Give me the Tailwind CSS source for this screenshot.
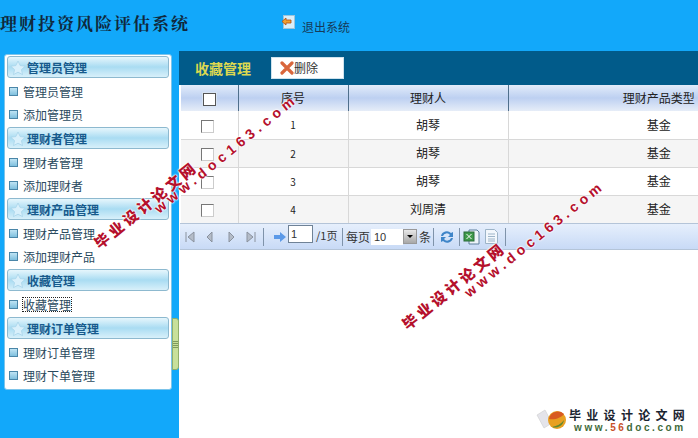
<!DOCTYPE html>
<html lang="zh">
<head>
<meta charset="UTF-8" />
<title>理财投资风险评估系统</title>
<script src="https://cdn.jsdelivr.net/npm/@tailwindcss/browser@4"></script>
</head>
<body class="relative w-[698px] h-[438px] overflow-hidden bg-[#12a8fa] font-['Noto_Sans_CJK_SC','Liberation_Sans',sans-serif] text-[12px] text-[#222]">

<!-- Header -->
<header class="h-[51px] flex items-start">
  <h1 class="w-[272px] pt-[11px] text-[17px] leading-[24px] font-bold tracking-[2px] text-[#10283c] font-['Noto_Serif_CJK_SC','Noto_Sans_CJK_SC',serif] whitespace-nowrap">理财投资风险评估系统</h1>
  <svg class="mt-[14px] ml-[9px]" width="15" height="16" viewBox="0 0 15 16">
    <rect x="2.500" y="1.500" width="11" height="13" fill="#d8eefa" stroke="#9cc4dc" stroke-width="1"/>
    <path d="M1 7.500 5 4v2h5v3H5v2z" fill="#f0a030" stroke="#b04a10" stroke-width=".8"/>
  </svg>
  <span class="mt-[18px] ml-[6px] text-[#163a58] leading-[18px]">退出系统</span>
</header>

<div class="flex h-[387px]">
  <!-- Sidebar -->
  <div class="relative w-[179px] shrink-0">
    <nav class="mt-[3px] ml-[4px] w-[168px] h-[336px] bg-white rounded-[3px] border border-[#7cc4ea] px-[2px] pt-[1px] text-[#2a4a5e]">

      <div class="h-[22px] pt-[1px] flex items-center rounded-[3px] border border-[#8db9cf] bg-gradient-to-b from-[#e6f6fc] via-[#a9dcf2] to-[#d8f0fa] pl-[2px] font-bold text-[#175a8c]">
        <svg class="mr-[1px]" width="16" height="16" viewBox="0 0 16 16"><path d="M8 1l2.200 4.600 5 .6-3.700 3.400 1 5L8 12.200 3.500 14.600l1-5L.8 6.200l5-.6z" fill="#d9f0fb" stroke="#a8d4ea" stroke-width=".8"/></svg>
        管理员管理
      </div>
      <ul class="pt-[2px] pb-[1px]">
        <li class="h-[23px] flex items-center pl-[2px]"><span class="w-[9px] h-[9px] mr-[5px] border border-[#4a86a8] bg-gradient-to-b from-[#bfe4f4] to-[#7fc0de]"></span>管理员管理</li>
        <li class="h-[23px] flex items-center pl-[2px]"><span class="w-[9px] h-[9px] mr-[5px] border border-[#4a86a8] bg-gradient-to-b from-[#bfe4f4] to-[#7fc0de]"></span>添加管理员</li>
      </ul>

      <div class="h-[22px] pt-[1px] flex items-center rounded-[3px] border border-[#8db9cf] bg-gradient-to-b from-[#e6f6fc] via-[#a9dcf2] to-[#d8f0fa] pl-[2px] font-bold text-[#175a8c]">
        <svg class="mr-[1px]" width="16" height="16" viewBox="0 0 16 16"><path d="M8 1l2.200 4.600 5 .6-3.700 3.400 1 5L8 12.200 3.500 14.600l1-5L.8 6.200l5-.6z" fill="#d9f0fb" stroke="#a8d4ea" stroke-width=".8"/></svg>
        理财者管理
      </div>
      <ul class="pt-[2px] pb-[1px]">
        <li class="h-[23px] flex items-center pl-[2px]"><span class="w-[9px] h-[9px] mr-[5px] border border-[#4a86a8] bg-gradient-to-b from-[#bfe4f4] to-[#7fc0de]"></span>理财者管理</li>
        <li class="h-[23px] flex items-center pl-[2px]"><span class="w-[9px] h-[9px] mr-[5px] border border-[#4a86a8] bg-gradient-to-b from-[#bfe4f4] to-[#7fc0de]"></span>添加理财者</li>
      </ul>

      <div class="h-[22px] pt-[1px] flex items-center rounded-[3px] border border-[#8db9cf] bg-gradient-to-b from-[#e6f6fc] via-[#a9dcf2] to-[#d8f0fa] pl-[2px] font-bold text-[#175a8c]">
        <svg class="mr-[1px]" width="16" height="16" viewBox="0 0 16 16"><path d="M8 1l2.200 4.600 5 .6-3.700 3.400 1 5L8 12.200 3.500 14.600l1-5L.8 6.200l5-.6z" fill="#d9f0fb" stroke="#a8d4ea" stroke-width=".8"/></svg>
        理财产品管理
      </div>
      <ul class="pt-[2px] pb-[1px]">
        <li class="h-[23px] flex items-center pl-[2px]"><span class="w-[9px] h-[9px] mr-[5px] border border-[#4a86a8] bg-gradient-to-b from-[#bfe4f4] to-[#7fc0de]"></span>理财产品管理</li>
        <li class="h-[23px] flex items-center pl-[2px]"><span class="w-[9px] h-[9px] mr-[5px] border border-[#4a86a8] bg-gradient-to-b from-[#bfe4f4] to-[#7fc0de]"></span>添加理财产品</li>
      </ul>

      <div class="h-[22px] pt-[1px] flex items-center rounded-[3px] border border-[#8db9cf] bg-gradient-to-b from-[#e6f6fc] via-[#a9dcf2] to-[#d8f0fa] pl-[2px] font-bold text-[#175a8c]">
        <svg class="mr-[1px]" width="16" height="16" viewBox="0 0 16 16"><path d="M8 1l2.200 4.600 5 .6-3.700 3.400 1 5L8 12.200 3.500 14.600l1-5L.8 6.200l5-.6z" fill="#d9f0fb" stroke="#a8d4ea" stroke-width=".8"/></svg>
        收藏管理
      </div>
      <ul class="pt-[2px] pb-[1px]">
        <li class="h-[23px] flex items-center pl-[2px]"><span class="w-[9px] h-[9px] mr-[5px] border border-[#4a86a8] bg-gradient-to-b from-[#bfe4f4] to-[#7fc0de]"></span><span class="outline-1 outline-dotted outline-[#222] leading-[13px]">收藏管理</span></li>
      </ul>

      <div class="h-[22px] pt-[1px] flex items-center rounded-[3px] border border-[#8db9cf] bg-gradient-to-b from-[#e6f6fc] via-[#a9dcf2] to-[#d8f0fa] pl-[2px] font-bold text-[#175a8c]">
        <svg class="mr-[1px]" width="16" height="16" viewBox="0 0 16 16"><path d="M8 1l2.200 4.600 5 .6-3.700 3.400 1 5L8 12.200 3.500 14.600l1-5L.8 6.200l5-.6z" fill="#d9f0fb" stroke="#a8d4ea" stroke-width=".8"/></svg>
        理财订单管理
      </div>
      <ul class="pt-[2px] pb-[1px]">
        <li class="h-[23px] flex items-center pl-[2px]"><span class="w-[9px] h-[9px] mr-[5px] border border-[#4a86a8] bg-gradient-to-b from-[#bfe4f4] to-[#7fc0de]"></span>理财订单管理</li>
        <li class="h-[23px] flex items-center pl-[2px]"><span class="w-[9px] h-[9px] mr-[5px] border border-[#4a86a8] bg-gradient-to-b from-[#bfe4f4] to-[#7fc0de]"></span>理财下单管理</li>
      </ul>
    </nav>
    <!-- Collapse handle -->
    <div class="absolute left-[172px] top-[267px] w-[7px] h-[52px] bg-[#c8e09a] border border-[#8fae6a] rounded-r-[3px] flex flex-col justify-center gap-[1px]">
      <span class="h-px bg-[#7f9a5e]"></span><span class="h-px bg-[#7f9a5e]"></span><span class="h-px bg-[#7f9a5e]"></span><span class="h-px bg-[#7f9a5e]"></span>
    </div>
  </div>

  <!-- Main -->
  <main class="flex-1 min-w-0 bg-white overflow-hidden">
    <div class="h-[34px] bg-[#015b8a] flex items-center pl-[16px]">
      <span class="w-[76px] text-[14px] font-bold text-[#dcd850]">收藏管理</span>
      <button class="w-[73px] h-[22px] bg-white border border-[#cfe3ee] flex items-center pl-[8px] text-[#333]">
        <svg width="14" height="14" viewBox="0 0 14 14"><path d="M2 2 12 12M12 2 2 12" stroke="#d9663c" stroke-width="3.200" stroke-linecap="round"/></svg>
        删除
      </button>
    </div>

    <table class="ml-[2px] w-[628px] table-fixed border-collapse text-center">
      <colgroup><col class="w-[57px]" /><col class="w-[110px]" /><col class="w-[160px]" /><col /></colgroup>
      <thead>
        <tr class="h-[26px] bg-gradient-to-b from-[#e2ecfa] via-[#bdd0f1] to-[#e6edf8] font-normal">
          <th class="font-normal border-r border-[#4f6f8c]"><span class="inline-block align-middle w-[13px] h-[13px] bg-white border border-[#555] outline outline-[#d8e4f4]"></span></th>
          <th class="font-normal border-r border-[#4f6f8c]">序号</th>
          <th class="font-normal border-r border-[#4f6f8c]">理财人</th>
          <th class="font-normal">理财产品类型</th>
        </tr>
      </thead>
      <tbody>
        <tr class="h-[28px] bg-white border-b border-[#d8d8d8]">
          <td class="border-r border-[#d8d8d8] pr-[3px]"><span class="inline-block align-middle w-[13px] h-[13px] bg-white border border-[#777] border-r-[#ccc] border-b-[#ccc]"></span></td>
          <td class="border-r border-[#d8d8d8] text-[10px]">1</td>
          <td class="border-r border-[#d8d8d8]">胡琴</td>
          <td>基金</td>
        </tr>
        <tr class="h-[28px] bg-[#f5f5f5] border-b border-[#d8d8d8]">
          <td class="border-r border-[#d8d8d8] pr-[3px]"><span class="inline-block align-middle w-[13px] h-[13px] bg-white border border-[#777] border-r-[#ccc] border-b-[#ccc]"></span></td>
          <td class="border-r border-[#d8d8d8] text-[10px]">2</td>
          <td class="border-r border-[#d8d8d8]">胡琴</td>
          <td>基金</td>
        </tr>
        <tr class="h-[28px] bg-white border-b border-[#d8d8d8]">
          <td class="border-r border-[#d8d8d8] pr-[3px]"><span class="inline-block align-middle w-[13px] h-[13px] bg-white border border-[#777] border-r-[#ccc] border-b-[#ccc]"></span></td>
          <td class="border-r border-[#d8d8d8] text-[10px]">3</td>
          <td class="border-r border-[#d8d8d8]">胡琴</td>
          <td>基金</td>
        </tr>
        <tr class="h-[28px] bg-[#f5f5f5]">
          <td class="border-r border-[#d8d8d8] pr-[3px]"><span class="inline-block align-middle w-[13px] h-[13px] bg-white border border-[#777] border-r-[#ccc] border-b-[#ccc]"></span></td>
          <td class="border-r border-[#d8d8d8] text-[10px]">4</td>
          <td class="border-r border-[#d8d8d8]">刘周清</td>
          <td>基金</td>
        </tr>
      </tbody>
    </table>

    <!-- Pager -->
    <div class="h-[27px] ml-[1px] flex items-center bg-gradient-to-b from-[#e6effc] to-[#c8daf6] border-y border-[#b4c4d8] pl-[5px] text-[#333]">
      <svg width="10" height="12" viewBox="0 0 10 12" class="mr-[11px]"><path d="M1 1v10M9 1 3 6l6 5z" fill="#b4bcc8" stroke="#8a929e"/></svg>
      <svg width="7" height="12" viewBox="0 0 7 12" class="mr-[15px]"><path d="M6 1 1 6l5 5z" fill="#b4bcc8" stroke="#8a929e"/></svg>
      <svg width="7" height="12" viewBox="0 0 7 12" class="mr-[11px]"><path d="M1 1l5 5-5 5z" fill="#b4bcc8" stroke="#8a929e"/></svg>
      <svg width="10" height="12" viewBox="0 0 10 12" class="mr-[7px]"><path d="M9 1v10M1 1l6 5-6 5z" fill="#b4bcc8" stroke="#8a929e"/></svg>
      <span class="w-px h-[18px] bg-[#7f93aa] mr-[10px]"></span>
      <svg width="12" height="10" viewBox="0 0 12 10" class="mr-[2px]"><path d="M0 3h6V0l6 5-6 5V7H0z" fill="#5c9ae8"/></svg>
      <input value="1" class="w-[25px] h-[18px] -mt-[5px] bg-white border border-[#6f8296] pl-[2px] text-[11px] font-['Liberation_Sans',sans-serif]" />
      <span class="ml-[3px] w-[26px] -mt-[3px] text-[11px]">/1页</span>
      <span class="w-px h-[18px] bg-[#7f93aa] mr-[3px]"></span>
      <span class="w-[25px]">每页</span>
      <span class="w-[32px] h-[16px] bg-white pl-[3px] leading-[16px] text-[11px] font-['Liberation_Sans',sans-serif]">10</span>
      <span class="w-[14px] h-[15px] bg-gradient-to-b from-[#e8e8e8] to-[#a8a8a8] border border-[#999] flex items-center justify-center"><span class="border-x-[3px] border-x-transparent border-t-[3px] border-t-black"></span></span>
      <span class="ml-[2px] w-[14px]">条</span>
      <span class="w-px h-[18px] bg-[#7f93aa] mr-[6px]"></span>
      <svg width="14" height="14" viewBox="0 0 14 14" class="mr-[5px]"><path d="M1 6a6 6 0 0 1 10-3l2-1v5H8l2-2a4 4 0 0 0-7 1zM13 8a6 6 0 0 1-10 3l-2 1V7h5L4 9a4 4 0 0 0 7-1z" fill="#3f85c8"/></svg>
      <span class="w-px h-[18px] bg-[#7f93aa] mr-[3px]"></span>
      <svg width="17" height="16" viewBox="0 0 17 16" class="mr-[4px]"><path d="M6 1h8l2 2v12H6z" fill="#eef4fa" stroke="#5d7f9c"/><rect x="1" y="3" width="10" height="9" fill="#3f9a4a" stroke="#2a6a3a"/><path d="M3.500 5l5 5M8.500 5l-5 5" stroke="#fff"/></svg>
      <svg width="15" height="17" viewBox="0 0 15 17" class="mr-[6px]"><path d="M1.500 1.500h9l3 3v11h-12z" fill="#f2f7fc" stroke="#9db4c8"/><path d="M4 6h7M4 8.500h7M4 11h7M4 13h7" stroke="#9db4c8"/></svg>
      <span class="w-px h-[18px] bg-[#7f93aa]"></span>
    </div>
  </main>
</div>

<!-- Site logo, bottom right -->
<div class="absolute left-[535px] top-[407px] flex items-center">
  <svg width="32" height="26" viewBox="0 0 32 26">
    <path d="M2 8 10 3l7 13-8 5z" fill="#e4e4ea" stroke="#ccc" stroke-width=".6"/>
    <circle cx="22" cy="13" r="9" fill="#e8a020"/>
    <path d="M14 12a9 9 0 0 1 15-5c-3 4-9 6-15 5z" fill="#d85a20"/>
    <path d="M17 20a9 9 0 0 0 12-7c-3 4-7 6-12 7z" fill="#5f8a30"/>
  </svg>
  <div class="ml-[2px]">
    <div class="text-[12px] leading-[15px] font-bold tracking-[5.300px] text-[#1a2430] whitespace-nowrap">毕业设计论文网</div>
    <div class="pl-[5px] text-[10px] leading-[11px] font-bold tracking-[2.600px] text-[#3f6a3a] font-['Liberation_Sans',sans-serif] whitespace-nowrap">www.<span class="text-[#c8502a]">56</span>doc.com</div>
  </div>
</div>

<!-- Watermarks -->
<span class="absolute left-[96px] top-[236px] origin-[0_50%] -rotate-[39deg] text-[15px] leading-[18px] font-black tracking-[3.300px] text-[#b5102c] whitespace-nowrap [text-shadow:0_0_2px_#fff,0_0_2px_#fff,0_0_2px_#fff]">毕业设计论文网</span>
<span class="absolute left-[156px] top-[201px] origin-[0_50%] -rotate-[39deg] text-[14px] leading-[18px] font-bold tracking-[4.500px] text-[#b5102c] font-['Liberation_Sans',sans-serif] whitespace-nowrap [text-shadow:0_0_2px_#fff,0_0_2px_#fff,0_0_2px_#fff]">www.doc163.com</span>
<span class="absolute left-[404px] top-[317px] origin-[0_50%] -rotate-[39deg] text-[15px] leading-[18px] font-black tracking-[3.300px] text-[#b5102c] whitespace-nowrap [text-shadow:0_0_2px_#fff,0_0_2px_#fff,0_0_2px_#fff]">毕业设计论文网</span>
<span class="absolute left-[466px] top-[285px] origin-[0_50%] -rotate-[39deg] text-[14px] leading-[18px] font-bold tracking-[4.200px] text-[#b5102c] font-['Liberation_Sans',sans-serif] whitespace-nowrap [text-shadow:0_0_2px_#fff,0_0_2px_#fff,0_0_2px_#fff]">www.doc163.com</span>
</body>
</html>
